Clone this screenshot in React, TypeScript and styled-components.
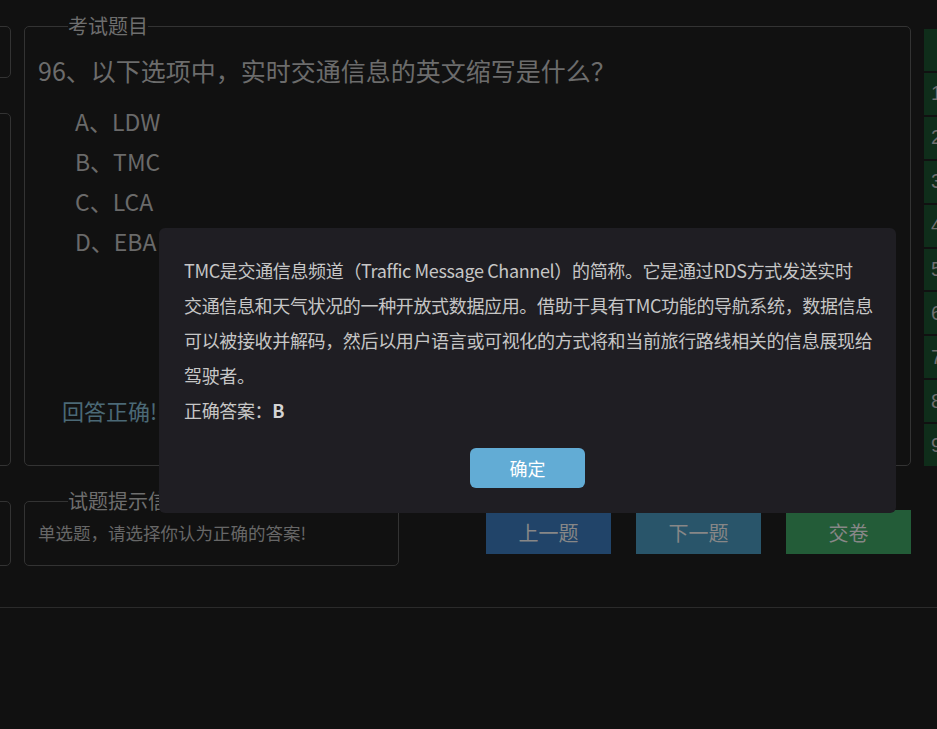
import React from "react";
import styled, { createGlobalStyle } from "styled-components";

const Global = createGlobalStyle`
  html, body { margin: 0; padding: 0; background: #111111; }
  body { overflow: hidden; font-family: "Noto Sans CJK SC", "Noto Sans", sans-serif; }
`;

const Page = styled.div`
  position: relative;
  width: 937px;
  height: 729px;
  overflow: hidden;
  background: #111111;
`;

const Grid = styled.div`
  display: grid;
  grid-template-columns: 200px 887px 200px;
  grid-template-rows: 450px 75px;
  column-gap: 13px;
  row-gap: 25px;
  margin-left: -189px;
  padding-top: 16px;
`;

const SideCol = styled.div<{ $top: number }>`
  display: flex;
  flex-direction: column;
  gap: 35px;
  padding-top: ${(p) => p.$top}px;
`;

const SideBox = styled.div<{ $h: number }>`
  height: ${(p) => p.$h}px;
  border: 1px solid #333333;
  border-radius: 5px;
  box-sizing: border-box;
`;

const Panel = styled.fieldset<{ $h: number; $w?: number }>`
  margin: 0;
  padding: 0 13px;
  height: ${(p) => p.$h}px;
  width: ${(p) => (p.$w ? `${p.$w}px` : "auto")};
  box-sizing: border-box;
  border: 1px solid #333333;
  border-radius: 5px;
  min-width: 0;
`;

const Legend = styled.legend`
  margin-left: 30px;
  padding: 0;
  font-size: 20px;
  line-height: 20px;
  color: #6e6e6e;
`;

const Question = styled.div`
  margin-top: 14px;
  font-size: 25px;
  line-height: 40px;
  color: #6c6c6c;
`;

const Options = styled.div`
  margin-top: 11px;
  padding-left: 37px;
  display: flex;
  flex-direction: column;
`;

const Option = styled.div`
  font-size: 23px;
  line-height: 40px;
  color: #6a6a6a;
`;

const Result = styled.div`
  margin-top: 129px;
  padding-left: 24px;
  font-size: 22px;
  line-height: 40px;
  color: #4b6976;
`;

const Table = styled.div`
  margin-top: 13px;
  display: flex;
  flex-direction: column;
  gap: 2px;
`;

const Cell = styled.div<{ $h: number }>`
  height: ${(p) => p.$h}px;
  background: #0f2d1a;
  display: flex;
  align-items: center;
  padding-left: 7px;
  font-family: "Liberation Sans", sans-serif;
  font-size: 20px;
  color: #6f6f6f;
`;

const BottomRow = styled.div`
  display: flex;
  justify-content: space-between;
  align-items: flex-start;
`;

const HintText = styled.div`
  margin-top: 8px;
  font-size: 17.5px;
  line-height: 28px;
  color: #676767;
`;

const Buttons = styled.div`
  display: flex;
  gap: 25px;
  margin-top: 19px;
`;

const NavButton = styled.button<{ $bg: string }>`
  width: 125px;
  height: 44px;
  border: none;
  background: ${(p) => p.$bg};
  color: #878787;
  font-family: "Noto Sans CJK SC", sans-serif;
  font-size: 20px;
  padding: 0;
`;

const Rule = styled.div`
  margin-top: 41px;
  height: 1px;
  background: #2b2b2b;
`;

const Dialog = styled.div`
  position: absolute;
  left: 159px;
  top: 228px;
  width: 737px;
  box-sizing: border-box;
  padding: 25px;
  background: #1f1e23;
  border-radius: 6px;
  display: flex;
  flex-direction: column;
  align-items: center;
`;

const DialogText = styled.div`
  align-self: stretch;
  font-size: 18px;
  line-height: 35px;
  letter-spacing: -0.35px;
  color: #c6c6c6;
  b { color: #d4d4d4; }
`;

const Line = styled.div`
  white-space: nowrap;
`;

const Confirm = styled.button`
  margin-top: 20px;
  width: 115px;
  height: 40px;
  border: none;
  border-radius: 6px;
  background: #62acd5;
  color: #ffffff;
  font-family: "Noto Sans CJK SC", sans-serif;
  font-size: 18px;
  padding: 0;
`;

const explanation = [
  "TMC是交通信息频道（Traffic Message Channel）的简称。它是通过RDS方式发送实时",
  "交通信息和天气状况的一种开放式数据应用。借助于具有TMC功能的导航系统，数据信息",
  "可以被接收并解码，然后以用户语言或可视化的方式将和当前旅行路线相关的信息展现给",
  "驾驶者。",
];

export default function App() {
  return (
    <Page>
      <Global />
      <Grid>
        <SideCol $top={10}>
          <SideBox $h={52} />
          <SideBox $h={353} />
        </SideCol>
        <Panel $h={450}>
          <Legend>考试题目</Legend>
          <Question>96、以下选项中，实时交通信息的英文缩写是什么？</Question>
          <Options>
            <Option>A、LDW</Option>
            <Option>B、TMC</Option>
            <Option>C、LCA</Option>
            <Option>D、EBA</Option>
          </Options>
          <Result>回答正确!</Result>
        </Panel>
        <Table>
          <Cell $h={42} />
          {[1, 2, 3, 4, 5, 6, 7, 8, 9].map((n) => (
            <Cell key={n} $h={42}>
              {n}
            </Cell>
          ))}
        </Table>
        <SideCol $top={10}>
          <SideBox $h={65} />
        </SideCol>
        <BottomRow>
          <Panel $h={75} $w={375}>
            <Legend>试题提示信息</Legend>
            <HintText>单选题，请选择你认为正确的答案!</HintText>
          </Panel>
          <Buttons>
            <NavButton $bg="#214469">上一题</NavButton>
            <NavButton $bg="#29556a">下一题</NavButton>
            <NavButton $bg="#235c38">交卷</NavButton>
          </Buttons>
        </BottomRow>
        <div />
      </Grid>
      <Rule />
      <Dialog>
        <DialogText>
          {explanation.map((l) => (
            <Line key={l}>{l}</Line>
          ))}
          <Line>
            正确答案：<b>B</b>
          </Line>
        </DialogText>
        <Confirm>确定</Confirm>
      </Dialog>
    </Page>
  );
}
